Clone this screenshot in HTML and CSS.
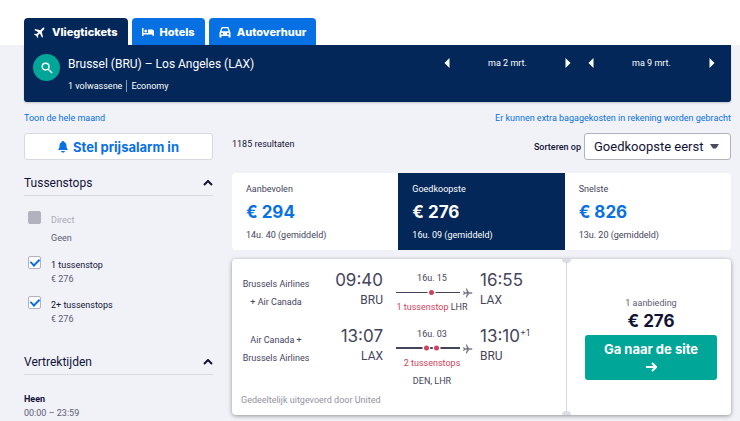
FILE: index.html
```html
<!DOCTYPE html>
<html lang="nl">
<head>
<meta charset="utf-8">
<meta name="viewport" content="width=device-width, initial-scale=1">
<title>Brussel – Los Angeles</title>
<link rel="stylesheet" href="styles.css">
</head>
<body>
<header class="top">
  <nav class="tabs">
    <a class="tab tab-active" href="#"><svg class="tab-icon" viewBox="0 0 24 24"><path transform="rotate(45 12 12)" d="M12 0c-1.200 0-2 1.500-2 3v6L1 14.500V17l9-2.500V20l-3 2v2l5-1.500 5 1.500v-2l-3-2v-5.500l9 2.500v-2.500L14 9V3c0-1.500-.8-3-2-3z"/></svg>Vliegtickets</a>
    <a class="tab" href="#"><svg class="tab-icon" viewBox="0 0 24 24"><path d="M0 4h3v10h9V7h8a4 4 0 0 1 4 4v9h-3v-3H3v3H0z"/><circle cx="7.500" cy="10" r="3"/></svg>Hotels</a>
    <a class="tab" href="#"><svg class="tab-icon" viewBox="0 0 24 24"><path fill-rule="evenodd" d="M6.500 2h11c1 0 1.700.5 2 1.500L22 11l1 2v10h-4v-3H5v3H1V13l1-2 2.500-7.500c.3-1 1-1.500 2-1.500zM7 4.500L5 10.500h14l-2-6zM6 13.500a2 2 0 1 0 0 4 2 2 0 0 0 0-4zm12 0a2 2 0 1 0 0 4 2 2 0 0 0 0-4z"/></svg>Autoverhuur</a>
  </nav>
</header>
<section class="search">
  <button class="search-btn" aria-label="Zoeken"><svg viewBox="0 0 13 13"><circle cx="5" cy="5" r="3.700"/><path d="M7.800 7.800L12 12"/></svg></button>
  <div class="trip">
    <h1>Brussel (BRU) – Los Angeles (LAX)</h1>
    <p><span>1 volwassene</span><span class="cabin">Economy</span></p>
  </div>
  <div class="dates">
    <div class="date"><button aria-label="Vorige dag"><svg viewBox="0 0 6 10"><path d="M5.500 0v10L.5 5z"/></svg></button><span>ma 2 mrt.</span><button aria-label="Volgende dag"><svg viewBox="0 0 6 10"><path d="M.5 0v10l5-5z"/></svg></button></div>
    <div class="date"><button aria-label="Vorige dag"><svg viewBox="0 0 6 10"><path d="M5.500 0v10L.5 5z"/></svg></button><span>ma 9 mrt.</span><button aria-label="Volgende dag"><svg viewBox="0 0 6 10"><path d="M.5 0v10l5-5z"/></svg></button></div>
  </div>
</section>
<div class="links"><a href="#">Toon de hele maand</a><a href="#">Er kunnen extra bagagekosten in rekening worden gebracht</a></div>
<div class="layout">
  <aside>
    <button class="alarm"><svg viewBox="0 0 10 12"><path d="M5 0c.7 0 1 .4 1 1 1.800.5 2.500 2 2.500 4 0 2 .5 2.500 1.500 4H0c1-1.500 1.500-2 1.500-4 0-2 .7-3.500 2.500-4 0-.6.300-1 1-1zM3 10h4c-.3 1-1 1.500-2 1.500S3.300 11 3 10z"/></svg>Stel prijsalarm in</button>
    <section class="filter">
      <h2>Tussenstops<svg viewBox="0 0 10 6"><path d="M1 5l4-4 4 4"/></svg></h2>
      <div class="option option-off"><input type="checkbox" id="direct" disabled><label for="direct">Direct<small>Geen</small></label></div>
      <div class="option"><input type="checkbox" id="one" checked><label for="one">1 tussenstop<small>€ 276</small></label></div>
      <div class="option"><input type="checkbox" id="two" checked><label for="two">2+ tussenstops<small>€ 276</small></label></div>
    </section>
    <section class="filter times">
      <h2>Vertrektijden<svg viewBox="0 0 10 6"><path d="M1 5l4-4 4 4"/></svg></h2>
      <h3>Heen</h3>
      <p>00:00 – 23:59</p>
    </section>
  </aside>
  <main>
    <div class="toolbar">
      <span class="count">1185 resultaten</span>
      <label for="sort">Sorteren op</label>
      <div class="select"><select id="sort"><option>Goedkoopste eerst</option></select><svg viewBox="0 0 9 5"><path d="M0 0h9L6 4.500H3z"/></svg></div>
    </div>
    <div class="sorts">
      <button class="sort"><span>Aanbevolen</span><strong>€ 294</strong><span>14u. 40 (gemiddeld)</span></button>
      <button class="sort sort-active"><span>Goedkoopste</span><strong>€ 276</strong><span>16u. 09 (gemiddeld)</span></button>
      <button class="sort"><span>Snelste</span><strong>€ 826</strong><span>13u. 20 (gemiddeld)</span></button>
    </div>
    <article class="ticket">
      <div class="legs">
        <div class="leg">
          <div class="airline">Brussels Airlines<br>+ Air Canada</div>
          <div class="place depart"><strong>09:40</strong><span>BRU</span></div>
          <div class="route">
            <span class="duration">16u. 15</span>
            <svg viewBox="0 0 77 11"><path class="line" d="M0 5.500h64"/><circle class="gap" cx="35.500" cy="5.500" r="4"/><circle class="stop" cx="35.500" cy="5.500" r="2.500"/><path class="plane" d="M76.500 6c0 .5-.6.700-1.200.7H73L70.800 10.500h-1L70.900 6.700h-2L68 8h-.8l.5-2-.5-2h.8l.9 1.300h2L69.800 1.500h1L73 5.300h2.300c.6 0 1.200.2 1.200.7z"/></svg>
            <span><em>1 tussenstop</em> LHR</span>
          </div>
          <div class="place"><strong>16:55</strong><span>LAX</span></div>
        </div>
        <div class="leg">
          <div class="airline">Air Canada +<br>Brussels Airlines</div>
          <div class="place depart"><strong>13:07</strong><span>LAX</span></div>
          <div class="route">
            <span class="duration">16u. 03</span>
            <svg viewBox="0 0 77 11"><path class="line line-thick" d="M0 5h64"/><circle class="gap" cx="30.500" cy="5" r="4"/><circle class="gap" cx="40.500" cy="5" r="4"/><path class="line line-thick" d="M34.500 5h2"/><circle class="stop" cx="30.500" cy="5" r="2.500"/><circle class="stop" cx="40.500" cy="5" r="2.500"/><path class="plane" d="M76.500 6c0 .5-.6.700-1.200.7H73L70.800 10.500h-1L70.900 6.700h-2L68 8h-.8l.5-2-.5-2h.8l.9 1.300h2L69.800 1.500h1L73 5.300h2.300c.6 0 1.200.2 1.200.7z"/></svg>
            <span><em>2 tussenstops</em><br>DEN, LHR</span>
          </div>
          <div class="place"><strong>13:10<sup>+1</sup></strong><span>BRU</span></div>
        </div>
        <p class="operator">Gedeeltelijk uitgevoerd door United</p>
      </div>
      <div class="offer">
        <span>1 aanbieding</span>
        <strong>€ 276</strong>
        <button>Ga naar de site <svg viewBox="0 0 11 10"><path d="M0 5h10M6 1l4 4-4 4"/></svg></button>
      </div>
    </article>
  </main>
</div>
</body>
</html>
```
FILE: styles.css
```css
* { box-sizing: border-box; }
body {
  margin: 0;
  padding: 0 9px 0 24px;
  background: linear-gradient(#fff 45px, #f1f2f8 45px);
  color: #111236;
  font-family: Roboto, "Liberation Sans", sans-serif;
  font-size: 9px;
  line-height: 18px;
}
h1, h2, h3, p { margin: 0; font-weight: 400; }
button { border: 0; padding: 0; margin: 0; background: none; font: inherit; color: inherit; cursor: pointer; }
a { color: #0770e3; text-decoration: none; }
svg { display: block; flex: none; }

.top { padding-top: 18px; }
.tabs { display: flex; gap: 4px; }
.tab {
  display: flex; align-items: center; gap: 6px;
  height: 27px; padding: 0 10px;
  border-radius: 4px 4px 0 0;
  background: #0770e3; color: #fff;
  font: 800 11px Inter, sans-serif;
}
.tab-active { background: #042759; }
.tab-icon { width: 12px; height: 12px; fill: #fff; }

.search {
  display: flex; gap: 8px;
  height: 57px; padding: 9px 15px 0 9px;
  border-radius: 0 0 3px 3px;
  background: #042759; color: #fff;
  box-shadow: 0 1px 2px #0003;
}
.search-btn { display: grid; place-items: center; width: 27px; height: 27px; border-radius: 50%; background: #00a698; }
.search-btn svg { width: 12px; height: 12px; fill: none; stroke: #fff; stroke-width: 1.500; }
.trip h1 { font-size: 12px; line-height: 20px; }
.trip p { display: flex; margin-top: 6px; line-height: 12px; }
.cabin { margin-left: 4px; padding-left: 4px; border-left: 1px solid #8a9bb5; }
.dates { display: flex; gap: 15px; margin-left: auto; line-height: 18px; }
.date { display: flex; justify-content: space-between; align-items: center; width: 129px; height: 18px; }
.date svg { width: 8px; height: 10px; fill: #fff; }

.links { display: flex; justify-content: space-between; padding: 7px 0 6px; }

.layout { display: grid; grid-template-columns: 189px 1fr; gap: 19px; }
.alarm {
  display: flex; align-items: center; justify-content: center; gap: 5px;
  width: 100%; height: 27px;
  border: 1px solid #d8d9e0; border-radius: 3px;
  background: #fff; color: #0770e3;
  font: 700 13px Inter, sans-serif;
}
.alarm svg { width: 10px; height: 12px; fill: #0770e3; }
.filter h2 {
  display: flex; align-items: center; justify-content: space-between;
  margin-top: 13px; padding-bottom: 2px;
  border-bottom: 1px solid #d9dae2;
  font-size: 12px; line-height: 20px;
}
.filter h2 svg { width: 10px; height: 6px; fill: none; stroke: #111236; stroke-width: 2; }
.option { display: flex; gap: 10px; margin-top: 10px; padding-left: 4px; }
.option input {
  appearance: none; display: grid; place-items: center;
  width: 13px; height: 13px; margin: 0;
  border: 1px solid #b2b1bd; border-radius: 2px; background: #fff;
}
.option input:checked::after {
  content: ""; width: 4px; height: 7px; margin-bottom: 2px;
  border: solid #0770e3; border-width: 0 2px 2px 0; transform: rotate(45deg);
}
.option label { padding-top: 2px; line-height: 14px; }
.option small { display: block; font-size: 9px; color: #5b5b73; }
.option-off { margin-top: 15px; color: #a9a9b5; }
.option-off input { background: #b2b1bd; }
.option-off label { padding-top: 0; line-height: 18px; }
.option-off + .option { margin-top: 9px; }
.times h2 { margin-top: 26px; }
.times h3 { margin-top: 17px; font-size: 9px; font-weight: 700; line-height: 14px; }
.times p { line-height: 14px; color: #5b5b73; }

.toolbar { display: flex; align-items: center; height: 27px; }
.toolbar label { margin-left: auto; margin-right: 3px; font-weight: 500; }
.count { align-self: flex-start; line-height: 22px; }
.select { display: grid; align-items: center; }
.select select, .select svg { grid-area: 1 / 1; }
.select select {
  appearance: none; width: 147px; height: 27px; padding: 0 9px;
  border: 1px solid #b2b1bd; border-radius: 3px;
  background: #fff; color: #111236; font: 13px Roboto, sans-serif;
}
.select svg { justify-self: end; width: 9px; height: 5px; margin-right: 12px; fill: #4a4a60; pointer-events: none; }

.sorts { display: grid; grid-template-columns: repeat(3, 1fr); margin-top: 13px; border-radius: 4px; overflow: hidden; }
.sort { display: flex; flex-direction: column; height: 77px; padding: 7px 14px; background: #fff; color: #44445c; text-align: left; }
.sort strong { color: #0770e3; font: 700 17px/28px Inter, sans-serif; }
.sort-active, .sort-active strong { background: #042759; color: #fff; }

.ticket {
  display: grid; grid-template-columns: 1fr 164px;
  margin: 9px 0 6px; border-radius: 4px;
  background: #fff; box-shadow: 0 1px 4px #0006;
}
.legs { position: relative; height: 156px; padding: 10px 0 0 9px; border-right: 1px solid #d8d9e0; }
.legs::before, .legs::after {
  content: ""; position: absolute; right: -5px;
  width: 9px; height: 4px; background: #dcdde4;
}
.legs::before { top: 0; border-radius: 0 0 5px 5px; }
.legs::after { bottom: 0; border-radius: 5px 5px 0 0; }
.leg { display: grid; grid-template-columns: 70px 1fr 77px 93px; height: 56px; color: #44445c; }
.airline { padding-top: 6px; text-align: center; }
.place { padding-left: 7px; }
.place strong { display: block; font: 400 17px/22px Inter, sans-serif; }
.place span { display: block; font-size: 12px; line-height: 18px; }
.place sup { font-size: 9px; line-height: 9px; vertical-align: 6px; }
.depart { padding: 0 13px 0 0; text-align: right; }
.route { text-align: center; white-space: nowrap; }
.route span { display: block; padding-right: 5px; }
.route svg { width: 77px; height: 11px; }
.route em { font-style: normal; color: #d1435b; }
.line { stroke: #44445c; stroke-width: 1; }
.line-thick { stroke-width: 2; }
.gap { fill: #fff; }
.stop { fill: #d1435b; }
.plane { fill: #77778a; }
.operator { margin-top: 10px; color: #92929f; line-height: 18px; }
.offer { display: flex; flex-direction: column; justify-content: center; padding: 0 14px 0 18px; text-align: center; color: #5b5b73; }
.offer strong { color: #111236; font: 700 17px/18px Inter, sans-serif; }
.offer button {
  height: 45px; margin-top: 5px; border-radius: 3px;
  background: #00a698; color: #fff; font: 700 13px/18px Inter, sans-serif;
}
.offer button svg { width: 11px; height: 10px; margin: 4px auto; fill: none; stroke: #fff; stroke-width: 2; }
```
